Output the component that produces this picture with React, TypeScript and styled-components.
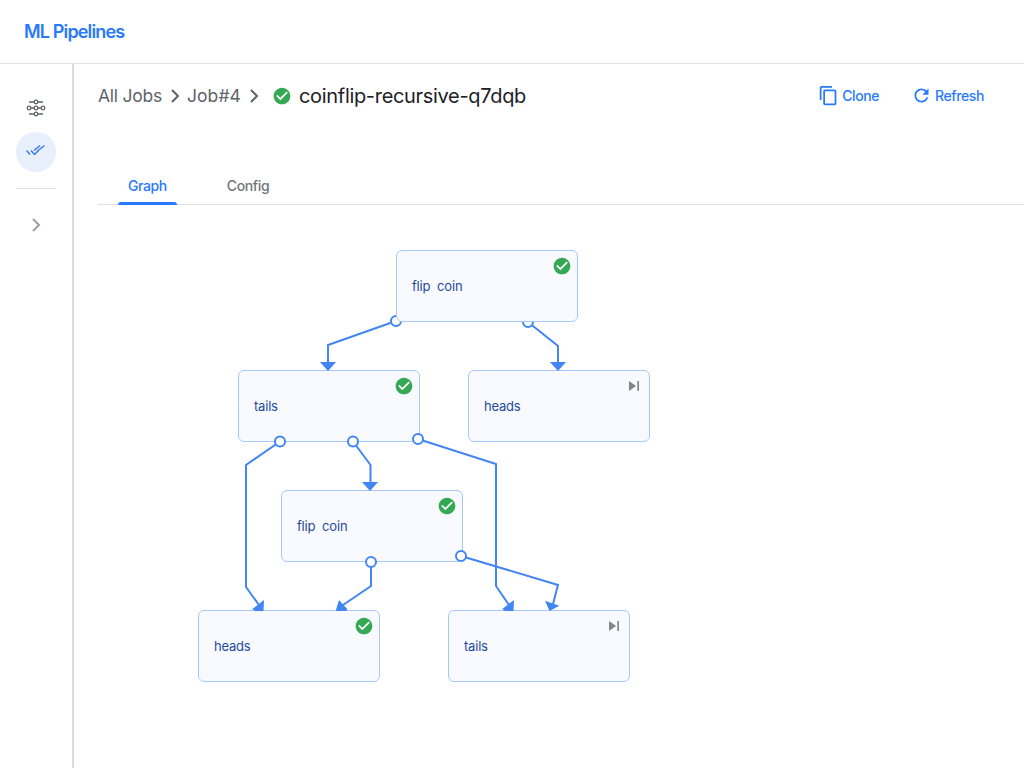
import React from "react";
import styled, { createGlobalStyle } from "styled-components";

const Global = createGlobalStyle`
  html, body { margin: 0; padding: 0; background: #fff; }
  body { font-family: "Inter", "Liberation Sans", sans-serif; }
`;

const Page = styled.div`
  width: 1024px;
  height: 768px;
  display: flex;
  flex-direction: column;
  overflow: hidden;
  background: #fff;
`;

const Header = styled.header`
  height: 63px;
  flex: none;
  display: flex;
  align-items: center;
  padding-left: 24px;
  border-bottom: 1px solid #e0e0e0;
`;

const Brand = styled.div`
  font: 600 18px "Inter", sans-serif;
  letter-spacing: -0.85px;
  color: #2979ff;
`;

const Body = styled.div`
  flex: 1;
  display: flex;
  min-height: 0;
`;

const Side = styled.aside`
  width: 72px;
  flex: none;
  box-sizing: content-box;
  border-right: 2px solid #dcdcdc;
  display: flex;
  flex-direction: column;
  align-items: center;
  padding-top: 24px;
`;

const SideItem = styled.div<{ $active?: boolean }>`
  width: 40px;
  height: 40px;
  border-radius: 50%;
  display: flex;
  align-items: center;
  justify-content: center;
  margin-bottom: 4px;
  background: ${(p) => (p.$active ? "#e8f0fe" : "transparent")};
`;

const SideRule = styled.div`
  width: 40px;
  height: 1px;
  background: #dedede;
  margin: 12px 0 16px;
`;

const Main = styled.main`
  flex: 1;
  min-width: 0;
  padding-left: 24px;
  display: flex;
  flex-direction: column;
`;

const TopRow = styled.div`
  height: 63px;
  flex: none;
  display: flex;
  align-items: center;
`;

const Crumb = styled.span<{ $tight?: boolean }>`
  font: 400 17.5px "Inter", sans-serif;
  letter-spacing: ${(p) => (p.$tight ? "-0.25px" : "0.1px")};
  color: #5f6368;
`;

const Title = styled.span`
  font: 400 20px "Inter", sans-serif;
  letter-spacing: -0.32px;
  color: #202124;
  margin-left: 7px;
`;

const Actions = styled.div`
  margin-left: auto;
  display: flex;
  align-items: center;
  gap: 32px;
  padding-right: 40px;
`;

const Action = styled.button`
  all: unset;
  display: flex;
  align-items: center;
  gap: 3px;
  color: #2979ff;
  font: 500 14px "Inter", sans-serif;
  letter-spacing: -0.4px;
`;

const Tabs = styled.nav`
  flex: none;
  height: 78px;
  box-sizing: border-box;
  border-bottom: 1px solid #e0e0e0;
  display: flex;
  align-items: flex-end;
  padding-left: 20px;
  gap: 40px;
`;

const Tab = styled.div<{ $active?: boolean }>`
  position: relative;
  height: 40px;
  padding: 12px 10px 0;
  margin-bottom: -1px;
  box-sizing: border-box;
  display: flex;
  align-items: flex-start;
  font: 500 14px "Inter", sans-serif;
  letter-spacing: -0.4px;
  color: ${(p) => (p.$active ? "#2979ff" : "#70757a")};
  &::after {
    content: "";
    display: ${(p) => (p.$active ? "block" : "none")};
    position: absolute;
    left: 0;
    right: 0;
    bottom: 0;
    height: 3px;
    border-radius: 3px 3px 0 0;
    background: #2979ff;
  }
`;

const Canvas = styled.section`
  position: relative;
  flex: 1;
`;

const Edges = styled.svg`
  position: absolute;
  left: -98px;
  top: -205px;
  width: 1024px;
  height: 768px;
  z-index: 2;
  pointer-events: none;
`;

const Node = styled.div<{ $x: number; $y: number; $front?: boolean }>`
  position: absolute;
  left: ${(p) => p.$x - 98}px;
  top: ${(p) => p.$y - 205}px;
  z-index: ${(p) => (p.$front ? 3 : 1)};
  width: 182px;
  height: 72px;
  box-sizing: border-box;
  padding: 0 0 1px 15px;
  display: flex;
  align-items: center;
  background: #f8faff;
  border: 1px solid #a8c7fa;
  border-radius: 6px;
  font: 400 13px "Inter", sans-serif;
  letter-spacing: -0.2px;
  color: #1f4a9c;
  word-spacing: 3.4px;
`;

const Badge = styled.span`
  position: absolute;
  top: 5px;
  right: 5px;
  width: 20px;
  height: 20px;
  display: block;
  line-height: 0;
`;

const StatusIcon = styled.span`
  display: flex;
  margin-left: 6px;
`;

const CHECK = "M12 2C6.48 2 2 6.48 2 12s4.48 10 10 10 10-4.48 10-10S17.52 2 12 2zm-2 15l-5-5 1.41-1.41L10 14.17l7.59-7.59L19 8l-9 9z";

const CheckIcon = ({ size = 20 }: { size?: number }) => (
  <svg width={size} height={size} viewBox="0 0 24 24" style={{ display: "block" }}>
    <circle cx="12" cy="12" r="8" fill="#fff" />
    <path d={CHECK} fill="#34a853" />
  </svg>
);

const SkipIcon = () => (
  <svg width="20" height="20" viewBox="0 0 24 24" style={{ display: "block" }}>
    <path d="M6 18l8.5-6L6 6v12zM16 6v12h2V6h-2z" fill="#80868b" />
  </svg>
);

const Chevron = ({ size, color, stroke }: { size: number; color: string; stroke: number }) => (
  <svg width={size} height={size} viewBox="0 0 24 24" style={{ display: "block", flex: "none" }}>
    <path d="M9 6l6 6-6 6" fill="none" stroke={color} strokeWidth={stroke} />
  </svg>
);

const CrumbChevron = styled.span`
  display: flex;
  margin: 0 0 0 1px;
`;

const CopyIcon = () => (
  <svg width="21" height="21" viewBox="0 0 24 24" style={{ display: "block" }}>
    <path fill="#2979ff" d="M16 1H4c-1.1 0-2 .9-2 2v14h2V3h12V1zm3 4H8c-1.1 0-2 .9-2 2v14c0 1.1.9 2 2 2h11c1.1 0 2-.9 2-2V7c0-1.1-.9-2-2-2zm0 16H8V7h11v14z" />
  </svg>
);

const RefreshIcon = () => (
  <svg width="21" height="21" viewBox="0 0 24 24" style={{ display: "block" }}>
    <path fill="#2979ff" d="M17.65 6.35C16.2 4.9 14.21 4 12 4c-4.42 0-7.99 3.58-7.99 8s3.57 8 7.99 8c3.73 0 6.84-2.55 7.73-6h-2.08c-.82 2.33-3.04 4-5.65 4-3.31 0-6-2.69-6-6s2.69-6 6-6c1.66 0 3.14.69 4.22 1.78L13 11h7V4l-2.35 2.35z" />
  </svg>
);

const TuneIcon = () => (
  <svg width="20" height="20" viewBox="26 98 20 20" style={{ display: "block" }}>
    <g fill="none" stroke="#5f6368" strokeWidth="1.3">
      <path d="M29 102h14M29 114h14M27 108h18" />
      <g fill="#fff">
        <circle cx="36" cy="102" r="1.8" />
        <circle cx="36" cy="114" r="1.8" />
        <circle cx="29" cy="108" r="1.8" />
        <circle cx="36" cy="108" r="1.8" />
        <circle cx="43" cy="108" r="1.8" />
      </g>
    </g>
  </svg>
);

const DoneIcon = () => (
  <svg width="20" height="20" viewBox="26 142 20 20" style={{ display: "block" }}>
    <g fill="none" stroke="#3b78e7" strokeWidth="1.5">
      <path d="M26.5 150.5l3.5 4 " />
      <path d="M31 150.5l3.5 4 4 -4M34 150.5l6 -5" />
      <path d="M37.5 151l7 -5.5" />
    </g>
  </svg>
);

type Pt = [number, number];
const edges: { c: Pt; line: Pt[]; arrow: Pt[] }[] = [
  { c: [396, 321], line: [[396, 321], [328, 345], [328, 364]], arrow: [[320, 362], [336, 362], [328, 371]] },
  { c: [528, 322], line: [[528, 322], [558, 346], [558, 364]], arrow: [[550, 362], [566, 362], [558, 371]] },
  { c: [280, 441.5], line: [[280, 441.5], [246, 465], [246, 587], [259, 605]], arrow: [[252.3, 609], [264, 600], [263.5, 611], [255, 611]] },
  { c: [353, 441.5], line: [[353, 441.5], [370.5, 465], [370.5, 484]], arrow: [[362, 482], [378, 482], [370, 491]] },
  { c: [418, 439], line: [[418, 439], [496, 464], [496, 586], [509, 605]], arrow: [[502.3, 609], [514, 600], [513.5, 611], [505, 611]] },
  { c: [461, 556], line: [[461, 556], [558, 585], [553, 604]], arrow: [[545, 600.7], [559.3, 605.7], [549.5, 611]] },
  { c: [371, 562], line: [[371, 562], [371, 586], [343, 605]], arrow: [[339, 600], [347.3, 609], [346, 611], [335.7, 611]] },
];

const pts = (list: Pt[]) => list.map((p) => p.join(",")).join(" ");

const nodes = [
  { x: 396, y: 250, label: "flip coin", done: true, front: true },
  { x: 238, y: 370, label: "tails", done: true },
  { x: 468, y: 370, label: "heads", done: false },
  { x: 281, y: 490, label: "flip coin", done: true },
  { x: 198, y: 610, label: "heads", done: true },
  { x: 448, y: 610, label: "tails", done: false },
];

export default function App() {
  return (
    <Page>
      <Global />
      <Header>
        <Brand>ML Pipelines</Brand>
      </Header>
      <Body>
        <Side>
          <SideItem>
            <TuneIcon />
          </SideItem>
          <SideItem $active>
            <DoneIcon />
          </SideItem>
          <SideRule />
          <SideItem>
            <Chevron size={24} color="#9e9e9e" stroke={2} />
          </SideItem>
        </Side>
        <Main>
          <TopRow>
            <Crumb $tight>All Jobs</Crumb>
            <CrumbChevron>
              <Chevron size={24} color="#5f6368" stroke={2} />
            </CrumbChevron>
            <Crumb>Job#4</Crumb>
            <CrumbChevron>
              <Chevron size={24} color="#5f6368" stroke={2} />
            </CrumbChevron>
            <StatusIcon>
              <CheckIcon size={20} />
            </StatusIcon>
            <Title>coinflip-recursive-q7dqb</Title>
            <Actions>
              <Action>
                <CopyIcon />
                Clone
              </Action>
              <Action>
                <RefreshIcon />
                Refresh
              </Action>
            </Actions>
          </TopRow>
          <Tabs>
            <Tab $active>Graph</Tab>
            <Tab>Config</Tab>
          </Tabs>
          <Canvas>
            {nodes.map((n) => (
              <Node key={`${n.x}-${n.y}`} $x={n.x} $y={n.y} $front={n.front}>
                {n.label}
                <Badge>{n.done ? <CheckIcon /> : <SkipIcon />}</Badge>
              </Node>
            ))}
            <Edges viewBox="0 0 1024 768">
              {edges.map((e) => (
                <g key={e.c.join()}>
                  <polyline points={pts(e.line)} fill="none" stroke="#4285f4" strokeWidth="2" />
                  <polygon points={pts(e.arrow)} fill="#4285f4" />
                  <circle cx={e.c[0]} cy={e.c[1]} r="5" fill="#fff" stroke="#4285f4" strokeWidth="2" />
                </g>
              ))}
            </Edges>
          </Canvas>
        </Main>
      </Body>
    </Page>
  );
}
